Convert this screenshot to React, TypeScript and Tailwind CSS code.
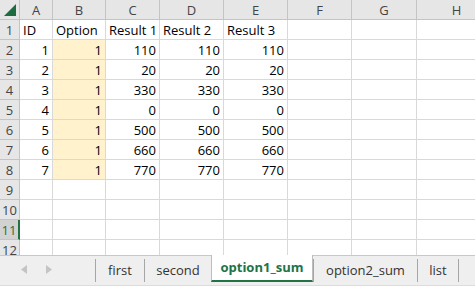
const cols = ['A', 'B', 'C', 'D', 'E', 'F', 'G', 'H']

type Cell = string | number | null

const rows: Cell[][] = [
  ['ID', 'Option', 'Result 1', 'Result 2', 'Result 3'],
  [1, 1, 110, 110, 110],
  [2, 1, 20, 20, 20],
  [3, 1, 330, 330, 330],
  [4, 1, 0, 0, 0],
  [5, 1, 500, 500, 500],
  [6, 1, 660, 660, 660],
  [7, 1, 770, 770, 770],
  [],
  [],
  [],
  [],
]

const tabs = ['first', 'second', 'option1_sum', 'option2_sum', 'list']

function GridCell({ value, col, row }: { value: Cell; col: number; row: number }) {
  const filled = col === 1 && row >= 2 && row <= 8
  const num = typeof value === 'number'
  return (
    <div
      className={`h-5 border-r border-b border-[#d9d9d9] px-[3px] text-[13px] leading-5 text-black whitespace-nowrap overflow-visible ${
        num ? 'text-right' : 'text-left'
      } ${filled ? 'bg-[#fff2cc]' : 'bg-white'}`}
    >
      {value ?? ''}
    </div>
  )
}

export default function App() {
  return (
    <div
      className="w-[475px] h-[286px] overflow-hidden bg-white flex flex-col"
      style={{ fontFamily: '"Open Sans", "Noto Sans", sans-serif' }}
    >
      <div className="h-[255px] overflow-hidden">
        <div className="grid grid-cols-[20px_33px_53px_54px_64px_64px_64px_65px_80px] w-[497px]">
          {/* corner */}
          <div className="h-5 bg-[#e6e6e6] border-r border-b border-[#c4c4c4] flex items-end justify-end p-[3px]">
            <svg width="12" height="12" viewBox="0 0 12 12">
              <polygon points="12,0 12,12 0,12" fill="#1e6b41" />
            </svg>
          </div>
          {cols.map((c) => (
            <div
              key={c}
              className="h-5 bg-[#e6e6e6] border-r border-b border-[#c4c4c4] text-center text-[13px] leading-5 text-[#444]"
            >
              {c}
            </div>
          ))}

          {rows.map((r, ri) => {
            const n = ri + 1
            const sel = n === 11
            return [
              <div
                key={`h${n}`}
                className={`h-5 border-b border-[#c4c4c4] text-center text-[13px] leading-5 ${
                  sel
                    ? 'bg-[#d2d2d2] text-[#217346] border-r-2 border-r-[#217346]'
                    : 'bg-[#e6e6e6] text-[#444] border-r border-r-[#c4c4c4]'
                }`}
              >
                {n}
              </div>,
              ...cols.map((_, ci) => (
                <GridCell key={`c${n}-${ci}`} value={r[ci] ?? null} col={ci} row={n} />
              )),
            ]
          })}
        </div>
      </div>

      {/* sheet tabs */}
      <div className="flex-1 flex bg-[#efefef] border-t border-[#c8c8c8] text-[13px] pb-[3px] border-b border-b-[#dcdcdc]">
        <div className="w-[95px] flex items-center gap-[19px] pl-[21px]">
          <svg width="6" height="9" viewBox="0 0 6 9">
            <polygon points="6,0 6,9 0,4.5" fill="#c4c4c4" />
          </svg>
          <svg width="6" height="9" viewBox="0 0 6 9">
            <polygon points="0,0 0,9 6,4.5" fill="#c4c4c4" />
          </svg>
        </div>
        {tabs.map((t) => {
          const active = t === 'option1_sum'
          const w =
            t === 'first' ? 'w-[49px]' : t === 'second' ? 'w-[67px]' : t === 'option1_sum' ? 'w-[102px]' : t === 'option2_sum' ? 'w-[104px]' : 'w-[41px]'
          return active ? (
            <div
              key={t}
              className={`${w} -mt-px bg-white border-b-2 border-b-[#217346] border-x border-x-[#bdbdbd] flex items-center justify-center font-bold text-[#217346]`}
            >
              {t}
            </div>
          ) : (
            <div key={t} className={`${w} flex items-center justify-center border-l border-[#a6a6a6] mt-[3px] text-[#333]`}>
              {t}
            </div>
          )
        })}
        <div className="border-l border-[#a6a6a6] mt-[3px]" />
      </div>
    </div>
  )
}
